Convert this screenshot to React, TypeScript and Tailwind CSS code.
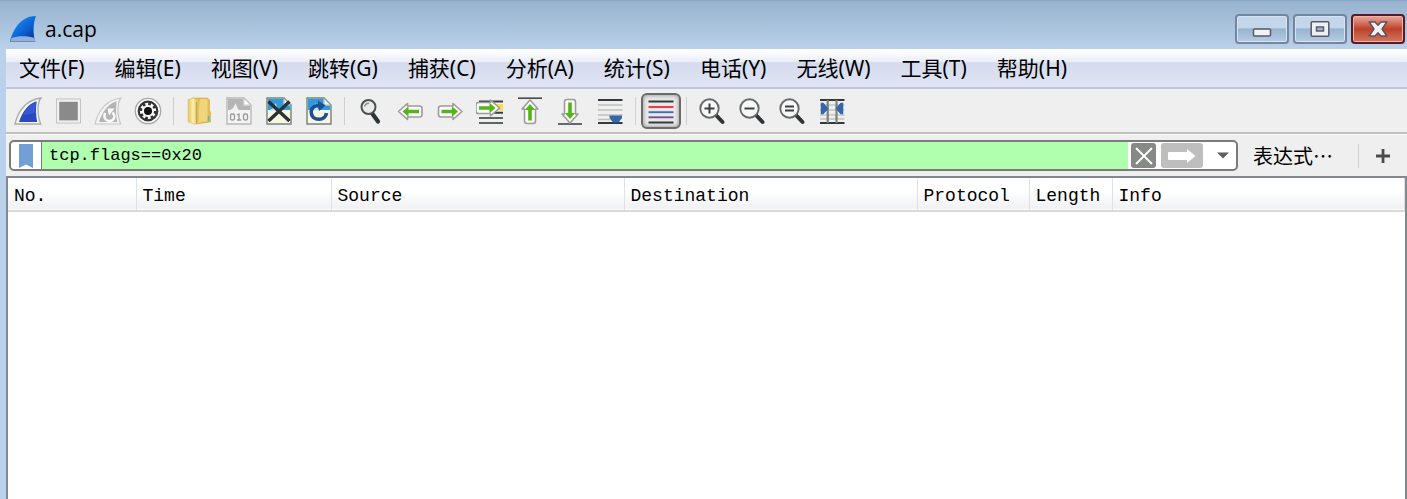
import type { ReactNode } from "react";

const menus = ["文件(F)", "编辑(E)", "视图(V)", "跳转(G)", "捕获(C)", "分析(A)", "统计(S)", "电话(Y)", "无线(W)", "工具(T)", "帮助(H)"];

const columns = [
  { name: "No.", width: "w-[128px]" },
  { name: "Time", width: "w-[195px]" },
  { name: "Source", width: "w-[293px]" },
  { name: "Destination", width: "w-[293px]" },
  { name: "Protocol", width: "w-[112px]" },
  { name: "Length", width: "w-[83px]" },
  { name: "Info", width: "" },
];

function Icon({ children }: { children: ReactNode }) {
  return (
    <svg viewBox="0 0 28 28" className="size-7 shrink-0" fill="none" aria-hidden="true">
      {children}
    </svg>
  );
}

function AppLogo() {
  return (
    <svg viewBox="0 0 28 28" className="size-7" aria-hidden="true">
      <defs>
        <linearGradient id="logo" x1="0" y1="0" x2="1" y2="1">
          <stop offset="0.2" stopColor="#1b86ee" />
          <stop offset="0.6" stopColor="#0a5fd0" />
          <stop offset="1" stopColor="#032a86" />
        </linearGradient>
      </defs>
      <path d="M1 26C5 12 13 1 27 1C24 8 24 18 26 26Z" fill="url(#logo)" />
      <path d="M1 27L2.500 23C9 20.500 19 20.500 25.500 23L26.500 27Z" fill="#8fb0e2" />
      <path d="M1 26.500H26.500" stroke="#7889a8" strokeWidth="1" />
    </svg>
  );
}

const FIN = "M1 27C4.500 13 12 3 27 1C24.500 4 24 7 24 12C24 18 25 23 26.700 27Z";

const StartIcon = (
  <Icon>
    <path d={FIN} fill="#f7f7f7" stroke="#aaa" strokeWidth="1.300" />
    <path d="M5 25C8 15.500 13.500 7 22.700 4.200C21.700 11 21.800 18 23.200 25Z" fill="#2c48c0" />
    <path d="M9 18C12 11.500 16 7.500 22 5.500C21.500 9 21.400 12 21.700 16Z" fill="#4262da" opacity="0.6" />
  </Icon>
);
const StopIcon = (
  <Icon>
    <rect x="2.500" y="2" width="24" height="24" fill="#f1f1f1" stroke="#c3c3c3" />
    <rect x="5.200" y="4.800" width="18.600" height="18.600" fill="#8a8a8a" />
  </Icon>
);
const RestartIcon = (
  <Icon>
    <path d={FIN} fill="#f3f3f3" stroke="#c8c8c8" strokeWidth="1.200" />
    <path d="M5 25C8 15.500 13.500 7 22.700 4.200C21.700 11 21.800 18 23.200 25Z" fill="#b4b4b4" />
    <path d="M11.200 16C9 20 11.500 24 15.500 24C20 24 22 19 18.500 15.500" stroke="#fafafa" strokeWidth="2.500" />
    <path d="M13.500 11.500H20.500L15 18.500Z" fill="#fafafa" />
  </Icon>
);
const OptionsIcon = (
  <Icon>
    <circle cx="14" cy="14" r="12.700" fill="#fafafa" stroke="#a8a8a8" strokeWidth="1.300" />
    <circle cx="14" cy="14" r="9.300" fill="#fafafa" stroke="#333" strokeWidth="2.200" />
    <circle cx="14" cy="14" r="7.300" stroke="#333" strokeWidth="2.600" strokeDasharray="2.800 2.933" />
    <circle cx="14" cy="14" r="4" fill="#111" />
  </Icon>
);
const FolderIcon = (
  <Icon>
    <defs>
      <linearGradient id="folder">
        <stop offset="0" stopColor="#e5c75c" />
        <stop offset="0.5" stopColor="#fbeeb0" />
        <stop offset="1" stopColor="#ddba4d" />
      </linearGradient>
    </defs>
    <path d="M7 1H22.500L24.500 3V14L25.500 15V25L11 27Z" fill="#e2bd50" stroke="#cba93f" strokeWidth="0.600" />
    <path d="M15 2H22.500V24L12 26Z" fill="#efd57c" />
    <path d="M3 2.500L8.500 1L13.500 4V24L10.500 27.500L3 25Z" fill="url(#folder)" stroke="#dcc264" strokeWidth="0.600" />
    <path d="M11.500 5V26.500" stroke="#cda43b" strokeWidth="1.200" />
    <path d="M23.500 19V24" stroke="#61b3bd" strokeWidth="1.500" />
  </Icon>
);

function PageShape({ gray = false }: { gray?: boolean }) {
  return (
    <>
      <path d="M2 1H19L26 8V27H2Z" fill={gray ? "#f3f3f3" : "#f7f6e3"} stroke={gray ? "#b9b9b9" : "#75827e"} strokeWidth="1.400" />
      <path d="M3 2H18.500V8.500H25V13H3Z" fill={gray ? "#b5b5b5" : "#2e9bdc"} />
      <path d="M3 13.500C8 12.500 9 10 10.500 6C12 9 12 11.500 14.500 13.500Z" fill={gray ? "#f0f0f0" : "#bfe2f3"} />
      <path d="M19 1.500V8H25.500Z" fill="#fff" stroke={gray ? "#c4c4c4" : "#8aa3ab"} strokeWidth="0.800" />
    </>
  );
}

const SaveIcon = (
  <Icon>
    <PageShape gray />
    <g stroke="#999" strokeWidth="1.300">
      <rect x="5.500" y="17" width="4" height="6" rx="1.500" />
      <path d="M12 18L14 17V23M12 23H16.200" />
      <rect x="18.500" y="17" width="4" height="6" rx="1.500" />
    </g>
  </Icon>
);
const CloseFileIcon = (
  <Icon>
    <PageShape />
    <path d="M3.500 4.500L24.500 24M24.500 4.500L3.500 24" stroke="#2b3134" strokeWidth="3.400" />
  </Icon>
);
const ReloadIcon = (
  <Icon>
    <PageShape />
    <path d="M15 8.500C9.500 8 6.200 11 6.200 15C6.200 19.500 9.500 22.300 14 22.300C18 22.300 21 19.800 21.500 16" stroke="#1f4e96" strokeWidth="3.600" />
    <path d="M13 3.500L20.500 8.500L14 14Z" fill="#1f4e96" />
  </Icon>
);
const FindIcon = (
  <Icon>
    <path d="M15.500 15.500L22 24.500" stroke="#2e3436" strokeWidth="4.200" strokeLinecap="round" />
    <circle cx="12.500" cy="10" r="7" fill="#eaeaea" stroke="#4b5052" strokeWidth="2" />
    <path d="M8.500 9.500C9 7.500 10.500 6.200 13 6.200" stroke="#8b8f90" strokeWidth="1.500" />
  </Icon>
);

const ARROW = "M2.500 14.500L11.500 6.500V9H23.500Q26 9 26 11.500V17.500Q26 20 23.500 20H11.500V22.500Z";
function GreenArrow() {
  return (
    <>
      <path d={ARROW} fill="#fcfcfc" stroke="#9c9c9c" strokeWidth="1.600" strokeLinejoin="round" />
      <path d="M6.500 14.500L12.500 9.300V12.700H23V16.300H12.500V19.700Z" fill="#55b516" />
    </>
  );
}
const BackIcon = <Icon><GreenArrow /></Icon>;
const ForwardIcon = <Icon><g transform="translate(28.500 0) scale(-1 1)"><GreenArrow /></g></Icon>;
const GoToIcon = (
  <Icon>
    <path d="M3 4.500H27M3 15.800H27" stroke="#3a3f41" strokeWidth="1.900" />
    <path d="M20 7H27V13.500H20Z" fill="#f9dd4d" />
    <path d="M3 21H27M3 26H27" stroke="#5d6462" strokeWidth="1.900" />
    <g transform="translate(26 -3.500) scale(-1 1)"><GreenArrow /></g>
  </Icon>
);
const FirstIcon = (
  <Icon>
    <path d="M2 1.200H26" stroke="#4b5052" strokeWidth="1.700" />
    <g transform="translate(28.500 0.500) rotate(90)"><GreenArrow /></g>
  </Icon>
);
const LastIcon = (
  <Icon>
    <path d="M2 27H26" stroke="#4b5052" strokeWidth="1.700" />
    <g transform="translate(-0.500 28.500) rotate(-90)"><GreenArrow /></g>
  </Icon>
);
const AutoScrollIcon = (
  <Icon>
    <path d="M2 3H26.500M2 26H26.500" stroke="#343a3c" strokeWidth="1.800" />
    <path d="M2 8H26.500M2 13H26.500M2 18H26.500M2 22.500H14" stroke="#bdc0b9" strokeWidth="1.600" />
    <path d="M13.500 18.500H26V21L22.500 25.500H17L13.500 21Z" fill="#3466ab" />
  </Icon>
);
const ColorizeIcon = (
  <Icon>
    <path d="M1.500 4.500H26.500M1.500 25.500H26.500" stroke="#353a3c" strokeWidth="1.800" />
    <path d="M1.500 10H26.500" stroke="#ef3434" strokeWidth="1.900" />
    <path d="M1.500 15.200H26.500" stroke="#3c6fb6" strokeWidth="1.900" />
    <path d="M1.500 20.300H26.500" stroke="#785089" strokeWidth="1.900" />
  </Icon>
);
function ZoomIcon({ sign }: { sign: string }) {
  return (
    <Icon>
      <path d="M17 17L24.500 25" stroke="#2e3436" strokeWidth="4" strokeLinecap="round" />
      <circle cx="11.500" cy="11.500" r="9.200" fill="#f7f7f7" stroke="#656a6b" strokeWidth="1.900" />
      <path d={sign} stroke="#3b4042" strokeWidth="2" />
    </Icon>
  );
}
const ResizeIcon = (
  <Icon>
    <path d="M2 3H26.500M2 26H26.500" stroke="#343a3c" strokeWidth="1.900" />
    <path d="M2 8H26.500M2 13H26.500M2 18H26.500M2 22H26.500" stroke="#c4c7c0" strokeWidth="1.300" />
    <path d="M9.700 3V26M18.500 3V26" stroke="#7d827e" strokeWidth="2.200" />
    <path d="M3.500 6.500H5L9.500 11.500L5 16.500H3.500Z M24.500 6.500H23L18.500 11.500L23 16.500H24.500Z" fill="#3466ab" stroke="#3466ab" strokeWidth="1.500" />
  </Icon>
);

type Tool = { label: string; icon: ReactNode; pressed?: boolean };

const toolGroups: Tool[][] = [
  [
    { label: "开始捕获", icon: StartIcon },
    { label: "停止捕获", icon: StopIcon },
    { label: "重新开始捕获", icon: RestartIcon },
    { label: "捕获选项", icon: OptionsIcon },
  ],
  [
    { label: "打开", icon: FolderIcon },
    { label: "保存", icon: SaveIcon },
    { label: "关闭文件", icon: CloseFileIcon },
    { label: "重新加载", icon: ReloadIcon },
  ],
  [
    { label: "查找分组", icon: FindIcon },
    { label: "上一分组", icon: BackIcon },
    { label: "下一分组", icon: ForwardIcon },
    { label: "转到分组", icon: GoToIcon },
    { label: "首个分组", icon: FirstIcon },
    { label: "最新分组", icon: LastIcon },
    { label: "自动滚动", icon: AutoScrollIcon },
  ],
  [{ label: "着色", icon: ColorizeIcon, pressed: true }],
  [
    { label: "放大", icon: <ZoomIcon sign="M6.500 11.500H16.500M11.500 6.500V16.500" /> },
    { label: "缩小", icon: <ZoomIcon sign="M6.500 11.500H16.500" /> },
    { label: "正常大小", icon: <ZoomIcon sign="M7 9.500H16M7 13.500H16" /> },
    { label: "调整列宽", icon: ResizeIcon },
  ],
];

function ToolButton({ label, icon, pressed }: Tool) {
  return (
    <button
      type="button"
      aria-label={label}
      aria-pressed={pressed}
      className={
        pressed
          ? "flex h-9 w-10 items-center justify-center rounded-md border-2 border-[#6b6b6b] bg-[#e9e9e9] shadow-[inset_0_0_4px_#888]"
          : "flex h-9 w-10 items-center justify-center"
      }
    >
      {icon}
    </button>
  );
}

const captionGlass =
  "flex h-[30px] w-[54px] items-center justify-center rounded-[4px] border-2 border-[#75859f] bg-linear-to-b from-[#c3d6ea] from-45% via-[#98b3cf] via-50% to-[#b5cde6] shadow-[inset_0_0_0_1px_#d5e3f2]";

function CaptionButtons() {
  return (
    <div className="flex gap-1 self-start pt-[13px]">
      <button type="button" aria-label="最小化" className={captionGlass}>
        <svg viewBox="0 0 20 20" className="size-5" aria-hidden="true">
          <rect x="1.500" y="10" width="17" height="7" rx="1" fill="#f2f2f2" stroke="#555b6a" strokeWidth="1.500" />
        </svg>
      </button>
      <button type="button" aria-label="最大化" className={captionGlass}>
        <svg viewBox="0 0 20 20" className="size-5" aria-hidden="true">
          <rect x="1.200" y="2.700" width="17.600" height="14.600" rx="1" fill="#f0f0f0" stroke="#555b6a" strokeWidth="1.500" />
          <rect x="6.500" y="8" width="7" height="4" fill="#9bb4d0" stroke="#555b6a" strokeWidth="1.500" />
        </svg>
      </button>
      <button
        type="button"
        aria-label="关闭"
        className="flex h-[30px] w-[54px] items-center justify-center rounded-[4px] border-2 border-[#571a28] bg-linear-to-b from-[#e9a79c] from-0% via-[#bd4128] via-50% to-[#d47660] shadow-[inset_0_0_0_1px_#eeb4a8]"
      >
        <svg viewBox="0 0 20 20" className="size-5" aria-hidden="true">
          <path d="M1.200 3H7L10 6.200L13 3H18.800L14 10L18.800 17H13L10 13.800L7 17H1.200L6 10Z" fill="#f2f2f2" stroke="#5c5360" strokeWidth="1.400" strokeLinejoin="round" />
        </svg>
      </button>
    </div>
  );
}

function FilterBar() {
  return (
    <form className="flex h-[42px] items-center border-t border-[#fafafa] bg-[#efefef] pl-[3px]" onSubmit={(e) => e.preventDefault()}>
      <div className="flex h-[31px] min-w-0 flex-1 items-stretch overflow-hidden rounded-[5px] border-2 border-[#7b7b7b] bg-white">
        <button type="button" aria-label="书签" className="flex w-[31px] shrink-0 items-center justify-center border-r border-[#7b7b7b]">
          <svg viewBox="0 0 14 24" className="h-6 w-3.5" aria-hidden="true">
            <path d="M0 0H14V24L7 20.500L0 24Z" fill="#729fd4" />
          </svg>
        </button>
        <input
          aria-label="显示过滤器"
          defaultValue="tcp.flags==0x20"
          spellCheck={false}
          className="min-w-0 flex-1 bg-[#afffaf] pl-[7px] font-['Liberation_Mono',monospace] text-[17px] text-black outline-none"
        />
        <div className="flex shrink-0 items-center gap-[5px] pr-0.5 pl-[3px]">
          <button type="button" aria-label="清除" className="flex size-[25px] items-center justify-center rounded-[3px] bg-[#878a84]">
            <svg viewBox="0 0 20 20" className="size-5" aria-hidden="true">
              <path d="M2 2L18 18M18 2L2 18" stroke="#fff" strokeWidth="1.800" />
            </svg>
          </button>
          <button type="submit" aria-label="应用" className="flex h-[25px] w-[42px] items-center justify-center rounded-[3px] bg-[#bebebe]">
            <svg viewBox="0 0 30 16" className="h-4 w-[30px]" aria-hidden="true">
              <path d="M1 5Q1 4 2 4H20V1L28.500 8L20 15V12H2Q1 12 1 11Z" fill="#fff" />
            </svg>
          </button>
          <button type="button" aria-label="历史记录" className="flex h-[25px] w-[26px] items-center justify-center pl-1">
            <svg viewBox="0 0 12 7" className="h-[7px] w-3" aria-hidden="true">
              <path d="M0 0.500H12L6 6.500Z" fill="#5e5e5e" />
            </svg>
          </button>
        </div>
      </div>
      <button type="button" className="ml-[15px] font-['Noto_Sans_CJK_SC',sans-serif] text-[20px] leading-6 whitespace-nowrap text-black">
        表达式…
      </button>
      <div className="ml-[25px] h-6 w-px bg-[#cfcfcf]" />
      <button type="button" aria-label="添加" className="flex w-[48px] items-center justify-center">
        <svg viewBox="0 0 14 14" className="size-3.5" aria-hidden="true">
          <path d="M7 0V14M0 7H14" stroke="#4b4b4b" strokeWidth="2.800" />
        </svg>
      </button>
    </form>
  );
}

export default function App() {
  return (
    <div className="flex min-h-screen flex-col bg-[#b9d1ea] font-['Noto_Sans','Noto_Sans_CJK_SC',sans-serif] text-black">
      <header className="flex h-[49px] items-center justify-between border-t border-[#8ba5c2] bg-linear-to-b from-[#98b3cf] to-[#b9d1ea] pr-0.5 pl-[9px]">
        <div className="flex items-center gap-2 pt-2">
          <AppLogo />
          <h1 className="font-['Open_Sans',sans-serif] text-[21px] leading-7">a.cap</h1>
        </div>
        <CaptionButtons />
      </header>
      <div className="flex flex-1 flex-col pl-1.5">
        <nav className="flex h-10 items-center gap-1 border-b-2 border-[#c0c5dc] bg-[linear-gradient(#fff_5%,#e9edf6_34%,#d5dbed_36%,#e0e5f4)]">
          {menus.map((m) => (
            <button key={m} type="button" className="px-[13px] text-[21px] leading-8 whitespace-nowrap">
              {m}
            </button>
          ))}
        </nav>
        <div role="toolbar" className="flex h-[45px] items-center border-b-2 border-[#bfbfbf] bg-[#efefef] pl-0.5">
          {toolGroups.map((group, i) => (
            <div key={group[0].label} className="flex items-center">
              {i > 0 && <div className="mx-[5px] h-7 w-px bg-[#cfcfcf]" />}
              {group.map((t) => (
                <ToolButton key={t.label} {...t} />
              ))}
            </div>
          ))}
        </div>
        <FilterBar />
        <main className="flex-1 border-t-2 border-r-2 border-l-2 border-[#828790] bg-white">
          <table className="w-full table-fixed border-collapse">
            <thead>
              <tr className="h-[33px] border-b-2 border-[#d8d9db] bg-linear-to-b from-white from-40% to-[#f0f1f3]">
                {columns.map((c) => (
                  <th
                    key={c.name}
                    scope="col"
                    className={`${c.width} border-r border-[#dfe1e4] pt-1 pr-0 pb-0 pl-1.5 text-left font-['Liberation_Mono',monospace] text-[18px] leading-6 font-normal`}
                  >
                    {c.name}
                  </th>
                ))}
              </tr>
            </thead>
            <tbody />
          </table>
        </main>
      </div>
    </div>
  );
}
